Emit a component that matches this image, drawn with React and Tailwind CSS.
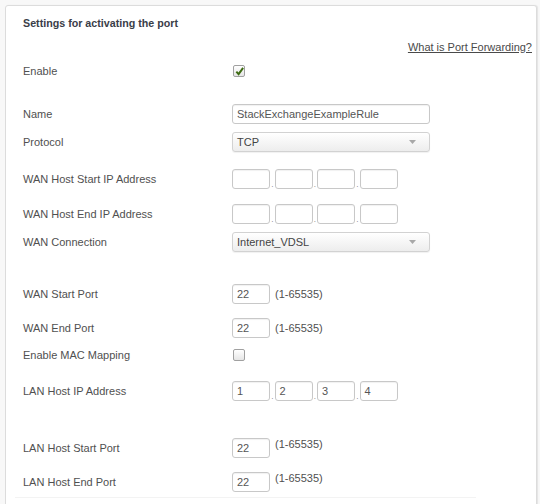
import React from "react";

const font = { fontFamily: '"Liberation Sans", Arial, sans-serif' };

function Row({ label, mt, top, children }) {
  return (
    <div className={`flex h-[20px] ${top ? "items-start" : "items-center"} ${mt}`}>
      <div className="w-[209px] shrink-0 text-[11px] leading-[20px] text-[#505050]">{label}</div>
      <div className={`flex ${top ? "items-start" : "items-center"}`}>{children}</div>
    </div>
  );
}

function TextBox({ value, className = "" }) {
  return (
    <div
      className={`h-[20px] rounded-[3px] border border-[#c8c8c8] bg-white px-[4px] text-[11px] leading-[18px] text-[#555] shadow-[inset_0_1px_1px_rgba(0,0,0,0.06)] ${className}`}
    >
      {value}
    </div>
  );
}

function Select({ value }) {
  return (
    <div className="flex h-[20px] w-[198px] items-center justify-between rounded-[3px] border border-[#d2d2d2] bg-gradient-to-b from-white to-[#ededed] px-[4px] text-[11px] text-[#444] shadow-[0_1px_1px_rgba(0,0,0,0.06)]">
      <span>{value}</span>
      <svg width="7" height="4" viewBox="0 0 7 4" className="mr-[9px]">
        <path d="M0 0 L7 0 L3.5 4 Z" fill="#a8a8a8" />
      </svg>
    </div>
  );
}

function IpBoxes({ values = ["", "", "", ""] }) {
  return (
    <div className="flex items-end">
      {values.map((v, i) => (
        <React.Fragment key={i}>
          {i > 0 && (
            <span className="w-[4.5px] text-center text-[8px] leading-[8px] text-[#777]">.</span>
          )}
          <TextBox value={v} className="w-[38px]" />
        </React.Fragment>
      ))}
    </div>
  );
}

function Port({ top }) {
  return (
    <>
      <TextBox value="22" className="w-[38px]" />
      <span className={`ml-[5px] text-[11px] text-[#505050] ${top ? "leading-[13px]" : ""}`}>(1-65535)</span>
    </>
  );
}

function Checkbox({ checked }) {
  return (
    <div className="ml-[1px] flex h-[12px] w-[12px] items-center justify-center rounded-[2px] border border-[#a0a0a0] bg-gradient-to-b from-white to-[#e6e6e6]">
      {checked && (
        <svg width="9" height="9" viewBox="0 0 10 10">
          <path d="M1.5 5.2 L4 8 L9 1" fill="none" stroke="#3d6b12" strokeWidth="2.2" />
        </svg>
      )}
    </div>
  );
}

export default function App() {
  return (
    <div className="h-[504px] w-[540px] overflow-hidden bg-[#f8f8f8] pl-[5px] pt-[5px]" style={font}>
      <div className="h-[520px] w-[532px] rounded-[3px] border border-[#dcdcdc] bg-white pl-[17px] pt-[7px] shadow-[1px_0_1px_#e4e4e4]">
        <div className="flex h-[20px] items-center text-[10.7px] font-bold text-[#3a3d48]">
          Settings for activating the port
        </div>
        <div className="mt-[4px] flex h-[20px] items-center justify-end pr-[4px]">
          <a href="#" className="text-[11px] text-[#4a4a4a] underline">
            What is Port Forwarding?
          </a>
        </div>
        <Row label="Enable" mt="mt-[4px]">
          <Checkbox checked />
        </Row>
        <Row label="Name" mt="mt-[23px]">
          <TextBox value="StackExchangeExampleRule" className="w-[198px]" />
        </Row>
        <Row label="Protocol" mt="mt-[8px]">
          <Select value="TCP" />
        </Row>
        <Row label="WAN Host Start IP Address" mt="mt-[17px]">
          <IpBoxes />
        </Row>
        <Row label="WAN Host End IP Address" mt="mt-[15px]">
          <IpBoxes />
        </Row>
        <Row label="WAN Connection" mt="mt-[8px]">
          <Select value="Internet_VDSL" />
        </Row>
        <Row label="WAN Start Port" mt="mt-[32px]">
          <Port />
        </Row>
        <Row label="WAN End Port" mt="mt-[14px]">
          <Port />
        </Row>
        <Row label="Enable MAC Mapping" mt="mt-[7px]">
          <Checkbox />
        </Row>
        <Row label="LAN Host IP Address" mt="mt-[16px]">
          <IpBoxes values={["1", "2", "3", "4"]} />
        </Row>
        <Row label="LAN Host Start Port" mt="mt-[37px]" top>
          <Port top />
        </Row>
        <Row label="LAN Host End Port" mt="mt-[14px]" top>
          <Port top />
        </Row>
        <div className="mt-[5px] mr-[60px] -ml-[8px] border-t border-[#f3f3f3]" />
      </div>
    </div>
  );
}
